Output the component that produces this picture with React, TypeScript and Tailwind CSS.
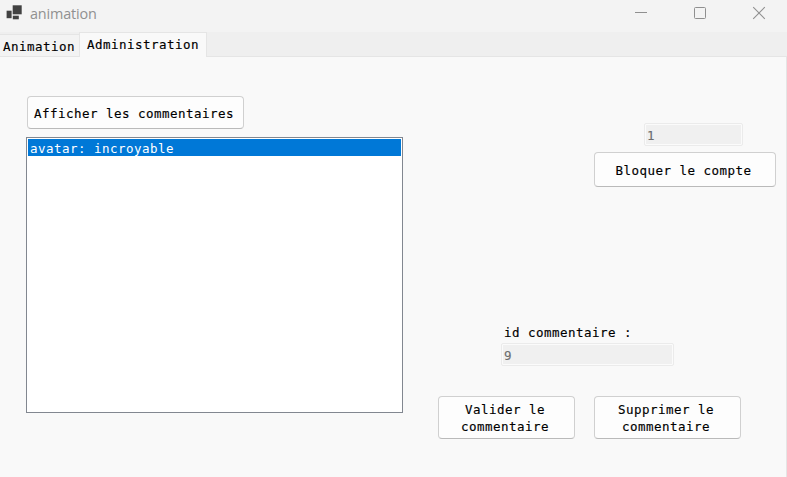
import React from 'react';

function PushButton({ className, children }: { className: string; children: React.ReactNode }) {
  return (
    <button
      className={`flex shrink-0 items-center justify-center rounded-[4px] border border-[#d0d0d0] border-b-[#bababa] bg-[#fdfdfd] pr-[3px] text-center ${className}`}
    >
      {children}
    </button>
  );
}

function ReadOnlyField({ className, value }: { className: string; value: string }) {
  return (
    <div className={`h-[23px] shrink-0 rounded-[2px] border border-[#ebebeb] bg-[#fbfbfb] p-px ${className}`}>
      <div className="h-full bg-[#f0f0f0] pl-px leading-[21px] text-[#6d6d6d]">{value}</div>
    </div>
  );
}

function TitleBar() {
  return (
    <header className="flex h-8 shrink-0 items-start justify-between bg-[#f3f3f3]">
      <div className="flex">
        <svg className="ml-[6px] mt-[5px]" width="17" height="16" viewBox="0 0 17 16">
          <rect x="6.7" y="0.3" width="9" height="9" fill="#414141" />
          <rect x="0.6" y="5.7" width="5" height="7.5" fill="#414141" />
          <rect x="6.8" y="10.7" width="6" height="3.6" fill="#414141" />
        </svg>
        <h1 className="ml-[7px] mt-[4px] font-['Open_Sans','Noto_Sans',sans-serif] text-[14.4px] leading-[20px] tracking-[-0.15px] text-[#909090] [-webkit-text-stroke:0px]">
          animation
        </h1>
      </div>
      <div className="mr-[21px] mt-[6px] flex gap-[45px]">
        <svg width="14" height="14" viewBox="0 0 14 14" fill="none" stroke="#8f8f8f">
          <path d="M1 6.5H13" />
        </svg>
        <svg width="14" height="14" viewBox="0 0 14 14" fill="none" stroke="#8f8f8f">
          <rect x="1.5" y="1.5" width="11" height="11" rx="1" />
        </svg>
        <svg width="14" height="14" viewBox="0 0 14 14" fill="none" stroke="#8f8f8f" strokeWidth="1.1">
          <path d="M1.2 1.2L12.8 12.8M12.8 1.2L1.2 12.8" />
        </svg>
      </div>
    </header>
  );
}

export default function App() {
  return (
    <div className="flex h-[477px] w-[787px] flex-col overflow-hidden bg-[#f9f9f9] font-['DejaVu_Sans_Mono',monospace] text-[12.5px] leading-[17px] tracking-[0.475px] text-black [-webkit-text-stroke:0.15px]">
      <TitleBar />
      <nav className="flex h-[25px] shrink-0 items-end bg-[#efefef]">
        <div className="h-[23px] w-[79px] border-y border-[#e5e5e5] bg-[#f3f3f3] pl-[3px] pt-[3px]">Animation</div>
        <div className="h-[25px] w-[128px] border-x border-t border-[#e5e5e5] bg-[#f9f9f9] pl-[7px] pt-[3px]">
          Administration
        </div>
        <div className="h-full flex-1 border-b border-[#e5e5e5]" />
      </nav>
      <main className="flex flex-1 border-r border-[#e5e5e5] pl-[26px]">
        <section className="flex w-[377px] flex-col pt-[39px]">
          <PushButton className="ml-px h-[33px] w-[217px] pt-[2px]">Afficher les commentaires</PushButton>
          <div className="mt-2 h-[276px] border border-[#828790] bg-white p-px">
            <div className="h-[17px] whitespace-pre bg-[#0078d7] pl-[2px] leading-[20px] text-white [-webkit-text-stroke:0px]">
              avatar: incroyable
            </div>
          </div>
        </section>
        <section className="ml-[35px] flex flex-1 flex-col pt-[66px]">
          <ReadOnlyField className="ml-[206px] w-[99px]" value="1" />
          <PushButton className="ml-[156px] mt-[6px] h-[35px] w-[182px] pt-px">Bloquer le compte</PushButton>
          <label className="ml-[66px] mt-[137px]">id commentaire :</label>
          <ReadOnlyField className="ml-[63px] mt-[2px] w-[173px]" value="9" />
          <div className="mt-[30px] flex gap-[19px]">
            <PushButton className="h-[43px] w-[137px]">
              Valider le
              <br />
              commentaire
            </PushButton>
            <PushButton className="h-[43px] w-[147px]">
              Supprimer le
              <br />
              commentaire
            </PushButton>
          </div>
        </section>
      </main>
    </div>
  );
}
